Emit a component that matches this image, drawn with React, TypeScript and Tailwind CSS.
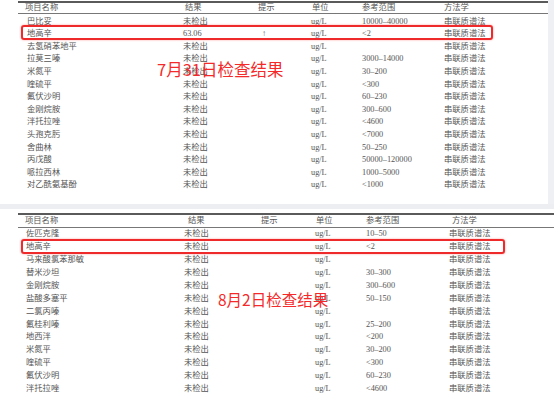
import React from "react";

type Col = { w: string; hp: string; dp: string };
type Row = [string, string, string, string, string, string];

const HEAD: Row = ["项目名称", "结果", "提示", "单位", "参考范围", "方法学"];

const julyCols: Col[] = [
  { w: "w-[162px]", hp: "pl-[7px]", dp: "pl-[9px]" },
  { w: "w-[75px]", hp: "pl-[5px]", dp: "pl-[3px]" },
  { w: "w-[53px]", hp: "pl-[3px]", dp: "pl-[7px]" },
  { w: "w-[51px]", hp: "pl-[4px]", dp: "pl-[3px]" },
  { w: "w-[82px]", hp: "pl-[3px]", dp: "pl-[3px]" },
  { w: "w-[88px]", hp: "pl-[3px]", dp: "pl-[3px]" },
];

const augCols: Col[] = [
  { w: "w-[163px]", hp: "pl-[7px]", dp: "pl-[8px]" },
  { w: "w-[77px]", hp: "pl-[7px]", dp: "pl-[3px]" },
  { w: "w-[54px]", hp: "pl-[3px]", dp: "pl-[3px]" },
  { w: "w-[51px]", hp: "pl-[4px]", dp: "pl-[3px]" },
  { w: "w-[83px]", hp: "pl-[3px]", dp: "pl-[3px]" },
  { w: "w-[89px]", hp: "pl-[6px]", dp: "pl-[3px]" },
];

const M = "串联质谱法";
const N = "未检出";

const julyRows: Row[] = [
  ["巴比妥", N, "", "ug/L", "10000–40000", M],
  ["地高辛", "63.06", "↑", "ug/L", "<2", M],
  ["去氢硝苯地平", N, "", "ug/L", "", M],
  ["拉莫三嗪", N, "", "ug/L", "3000–14000", M],
  ["米氮平", N, "", "ug/L", "30–200", M],
  ["喹硫平", N, "", "ug/L", "<300", M],
  ["氟伏沙明", N, "", "ug/L", "60–230", M],
  ["金刚烷胺", N, "", "ug/L", "300–600", M],
  ["泮托拉唑", N, "", "ug/L", "<4600", M],
  ["头孢克肟", N, "", "ug/L", "<7000", M],
  ["舍曲林", N, "", "ug/L", "50–250", M],
  ["丙戊酸", N, "", "ug/L", "50000–120000", M],
  ["哌拉西林", N, "", "ug/L", "1000–5000", M],
  ["对乙酰氨基酚", N, "", "ug/L", "<1000", M],
];

const augRows: Row[] = [
  ["佐匹克隆", N, "", "ug/L", "10–50", M],
  ["地高辛", N, "", "ug/L", "<2", M],
  ["马来酸氯苯那敏", N, "", "ug/L", "", M],
  ["替米沙坦", N, "", "ug/L", "30–300", M],
  ["金刚烷胺", N, "", "ug/L", "300–600", M],
  ["盐酸多塞平", N, "", "ug/L", "50–150", M],
  ["二氯丙嗪", N, "", "ug/L", "", M],
  ["氟桂利嗪", N, "", "ug/L", "25–200", M],
  ["地西泮", N, "", "ug/L", "<200", M],
  ["米氮平", N, "", "ug/L", "30–200", M],
  ["喹硫平", N, "", "ug/L", "<300", M],
  ["氟伏沙明", N, "", "ug/L", "60–230", M],
  ["泮托拉唑", N, "", "ug/L", "<4600", M],
];

function ReportTable({
  cols,
  rows,
  rowH,
  headH,
  bodyPad,
}: {
  cols: Col[];
  rows: Row[];
  rowH: string;
  headH: string;
  bodyPad: string;
}) {
  return (
    <div className="flex flex-col ml-[18px] text-[8.3px] text-[#555] font-['Liberation_Serif','Noto_Sans_CJK_SC',serif]">
      {/* header */}
      <div className={`flex items-center ${headH} border-t-2 border-b border-t-[#5a5a5a] border-b-[#777] leading-none`}>
        {HEAD.map((h, i) => (
          <div key={i} className={`${cols[i].w} ${cols[i].hp} shrink-0 whitespace-nowrap`}>
            {h}
          </div>
        ))}
      </div>
      <div className={`flex flex-col ${bodyPad}`}>
        {rows.map((r, ri) => (
          <div key={ri} className={`flex items-center ${rowH} leading-none`}>
            {r.map((c, i) => (
              <div key={i} className={`${cols[i].w} ${cols[i].dp} shrink-0 whitespace-nowrap`}>
                {c}
              </div>
            ))}
          </div>
        ))}
      </div>
    </div>
  );
}

export default function App() {
  return (
    <div className="w-[554px] h-[399px] overflow-hidden bg-[#eceef1] flex flex-col gap-[5px]">
      {/* 7月31日 page */}
      <div className="relative h-[204px] shrink-0 flex">
        <div className="w-[548px] bg-white pt-[1px]">
          <ReportTable cols={julyCols} rows={julyRows} rowH="h-[12.6px]" headH="h-[13px]" bodyPad="pt-[1.5px]" />
        </div>
        <div className="flex-1 bg-[#eef0f3]" />
        <div className="absolute left-[21px] top-[25px] w-[472px] h-[15px] rounded-[3px] border-2 border-[#ee2a2a] shadow-[0_0_2px_rgba(255,40,40,0.5)]" />
        <div className="absolute left-[157px] top-[61px] text-[16.5px] leading-none text-[#f42a2a] font-['Noto_Sans_CJK_SC',sans-serif] whitespace-nowrap">
          7月31日检查结果
        </div>
      </div>

      {/* 8月2日 page */}
      <div className="relative flex-1 bg-white pt-[4px]">
        <ReportTable cols={augCols} rows={augRows} rowH="h-[12.9px]" headH="h-[15px]" bodyPad="pt-0" />
        <div className="absolute left-[21px] top-[30px] w-[484px] h-[15px] rounded-[3px] border-2 border-[#ee2a2a] shadow-[0_0_2px_rgba(255,40,40,0.5)]" />
        <div className="absolute left-[218px] top-[83px] text-[15.5px] leading-none text-[#f42a2a] font-['Noto_Sans_CJK_SC',sans-serif] whitespace-nowrap">
          8月2日检查结果
        </div>
      </div>
    </div>
  );
}
